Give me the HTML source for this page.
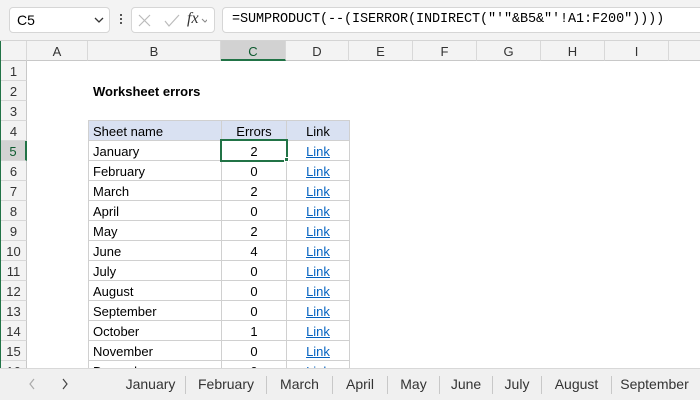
<!DOCTYPE html>
<html><head><style>
*{margin:0;padding:0;box-sizing:border-box}
body{width:700px;height:400px;overflow:hidden;background:#fff;font-family:"Liberation Sans",sans-serif;position:relative;font-size:13px;color:#000}
.abs{position:absolute}
.top{left:0;top:0;width:700px;height:41px;background:#f3f3f3;border-bottom:1px solid #d4d4d4}
.box{background:#fff;border:1px solid #d6d6d6;border-radius:4px;height:26px;top:7px}
.colh{top:41px;height:20px;background:#f3f3f3;border-bottom:1px solid #c8c8c8;text-align:center;line-height:21px;font-size:13px;color:#333;border-right:1px solid #d8d8d8}
.rowh{left:1px;width:26px;height:20px;background:#f3f3f3;border-bottom:1px solid #d8d8d8;border-right:1px solid #c8c8c8;text-align:center;line-height:21px;font-size:13px;color:#333}
.cell{height:21px;border:1px solid #d0d0d0;line-height:21px;font-size:13px;padding-left:4px}
.link{color:#0563c1;text-decoration:underline;text-align:center;padding:0}
.num{text-align:center;padding:0}
.tabs{left:0;top:368px;width:700px;height:32px;background:#f0f0f0;border-top:1px solid #d8d8d8}
.tab{top:376px;height:18px;line-height:16px;font-size:14px;color:#333;border-right:1px solid #c8c8c8;text-align:center}
</style></head><body>
<div class="abs" style="left:0;top:0;width:2px;height:400px;background:#217346"></div>
<div class="abs top"></div>
<div class="abs box" style="left:9px;width:101px;"><span class="abs" style="left:7px;top:4px;font-size:14px">C5</span>
<svg class="abs" style="left:84px;top:9px" width="10" height="7"><path d="M1 1L5 5L9 1" stroke="#333" fill="none" stroke-width="1.3"/></svg></div>
<div class="abs" style="left:120px;top:14px;width:2px;height:2px;background:#555;box-shadow:0 4px 0 #555,0 8px 0 #555"></div>
<div class="abs box" style="left:131px;width:84px;">
<svg class="abs" style="left:5px;top:6px" width="70" height="14"><path d="M2 1L13 12M13 1L2 12" stroke="#bbb" stroke-width="1.2"/><path d="M28 7L32 12L42 1" stroke="#bbb" stroke-width="1.2" fill="none"/><path d="M73 5L76 8L79 5" stroke="#888" fill="none" transform="translate(-8,0)"/></svg>
<span class="abs" style="left:55px;top:2px;font-family:'Liberation Serif',serif;font-style:italic;font-size:16px;color:#333">fx</span></div>
<div class="abs box" style="left:222px;width:490px;"><span class="abs" style="left:9px;top:4px;font-family:'Liberation Mono',monospace;font-size:13.5px;letter-spacing:-0.1px">=SUMPRODUCT(--(ISERROR(INDIRECT("'"&amp;B5&amp;"'!A1:F200"))))</span></div>

<div class="abs colh" style="left:1px;width:26px;"></div>
<div class="abs colh" style="left:27px;width:61px">A</div>
<div class="abs colh" style="left:88px;width:133px">B</div>
<div class="abs colh" style="left:221px;width:65px;background:#d2d2d2;border-bottom:2px solid #217346;color:#0c5a2e">C</div>
<div class="abs colh" style="left:286px;width:63px">D</div>
<div class="abs colh" style="left:349px;width:64px">E</div>
<div class="abs colh" style="left:413px;width:64px">F</div>
<div class="abs colh" style="left:477px;width:64px">G</div>
<div class="abs colh" style="left:541px;width:64px">H</div>
<div class="abs colh" style="left:605px;width:64px">I</div>
<div class="abs colh" style="left:669px;width:40px"></div>

<div class="abs rowh" style="top:61px">1</div>
<div class="abs rowh" style="top:81px">2</div>
<div class="abs rowh" style="top:101px">3</div>
<div class="abs rowh" style="top:121px">4</div>
<div class="abs rowh" style="top:141px;background:#d2d2d2;border-right:2px solid #217346;color:#0c5a2e">5</div>
<div class="abs rowh" style="top:161px">6</div>
<div class="abs rowh" style="top:181px">7</div>
<div class="abs rowh" style="top:201px">8</div>
<div class="abs rowh" style="top:221px">9</div>
<div class="abs rowh" style="top:241px">10</div>
<div class="abs rowh" style="top:261px">11</div>
<div class="abs rowh" style="top:281px">12</div>
<div class="abs rowh" style="top:301px">13</div>
<div class="abs rowh" style="top:321px">14</div>
<div class="abs rowh" style="top:341px">15</div>
<div class="abs rowh" style="top:361px">16</div>

<div class="abs" style="left:93px;top:84px;font-weight:bold;font-size:13px">Worksheet errors</div>

<div class="abs cell" style="left:88px;top:120px;width:134px;background:#d9e1f2">Sheet name</div>
<div class="abs cell num" style="left:221px;top:120px;width:66px;background:#d9e1f2">Errors</div>
<div class="abs cell num" style="left:286px;top:120px;width:64px;background:#d9e1f2">Link</div>

<div id="rows"></div>
<script>
var d=[["January",2],["February",0],["March",2],["April",0],["May",2],["June",4],["July",0],["August",0],["September",0],["October",1],["November",0],["December",0]];
var h="";
d.forEach(function(r,i){var t=140+i*20;
h+='<div class="abs cell" style="left:88px;top:'+t+'px;width:134px">'+r[0]+'</div>';
h+='<div class="abs cell num" style="left:221px;top:'+t+'px;width:66px">'+r[1]+'</div>';
h+='<div class="abs cell link" style="left:286px;top:'+t+'px;width:64px">Link</div>';});
document.getElementById("rows").innerHTML=h;
</script>
<div class="abs" style="left:220px;top:139px;width:68px;height:23px;border:2px solid #217346"></div>
<div class="abs" style="left:284px;top:157px;width:5px;height:5px;background:#217346;border:1px solid #fff"></div>

<div class="abs tabs"></div>
<svg class="abs" style="left:28px;top:377px" width="50" height="14"><path d="M6 2L2 7L6 12" stroke="#aaa" fill="none" stroke-width="1.2"/><path d="M35 2L39 7L35 12" stroke="#444" fill="none" stroke-width="1.2"/></svg>
<div class="abs tab" style="left:116px;width:70px">January</div>
<div class="abs tab" style="left:186px;width:81px">February</div>
<div class="abs tab" style="left:267px;width:66px">March</div>
<div class="abs tab" style="left:333px;width:55px">April</div>
<div class="abs tab" style="left:388px;width:52px">May</div>
<div class="abs tab" style="left:440px;width:53px">June</div>
<div class="abs tab" style="left:493px;width:49px">July</div>
<div class="abs tab" style="left:542px;width:70px">August</div>
<div class="abs tab" style="left:612px;width:85px;border:none">September</div>
</body></html>
